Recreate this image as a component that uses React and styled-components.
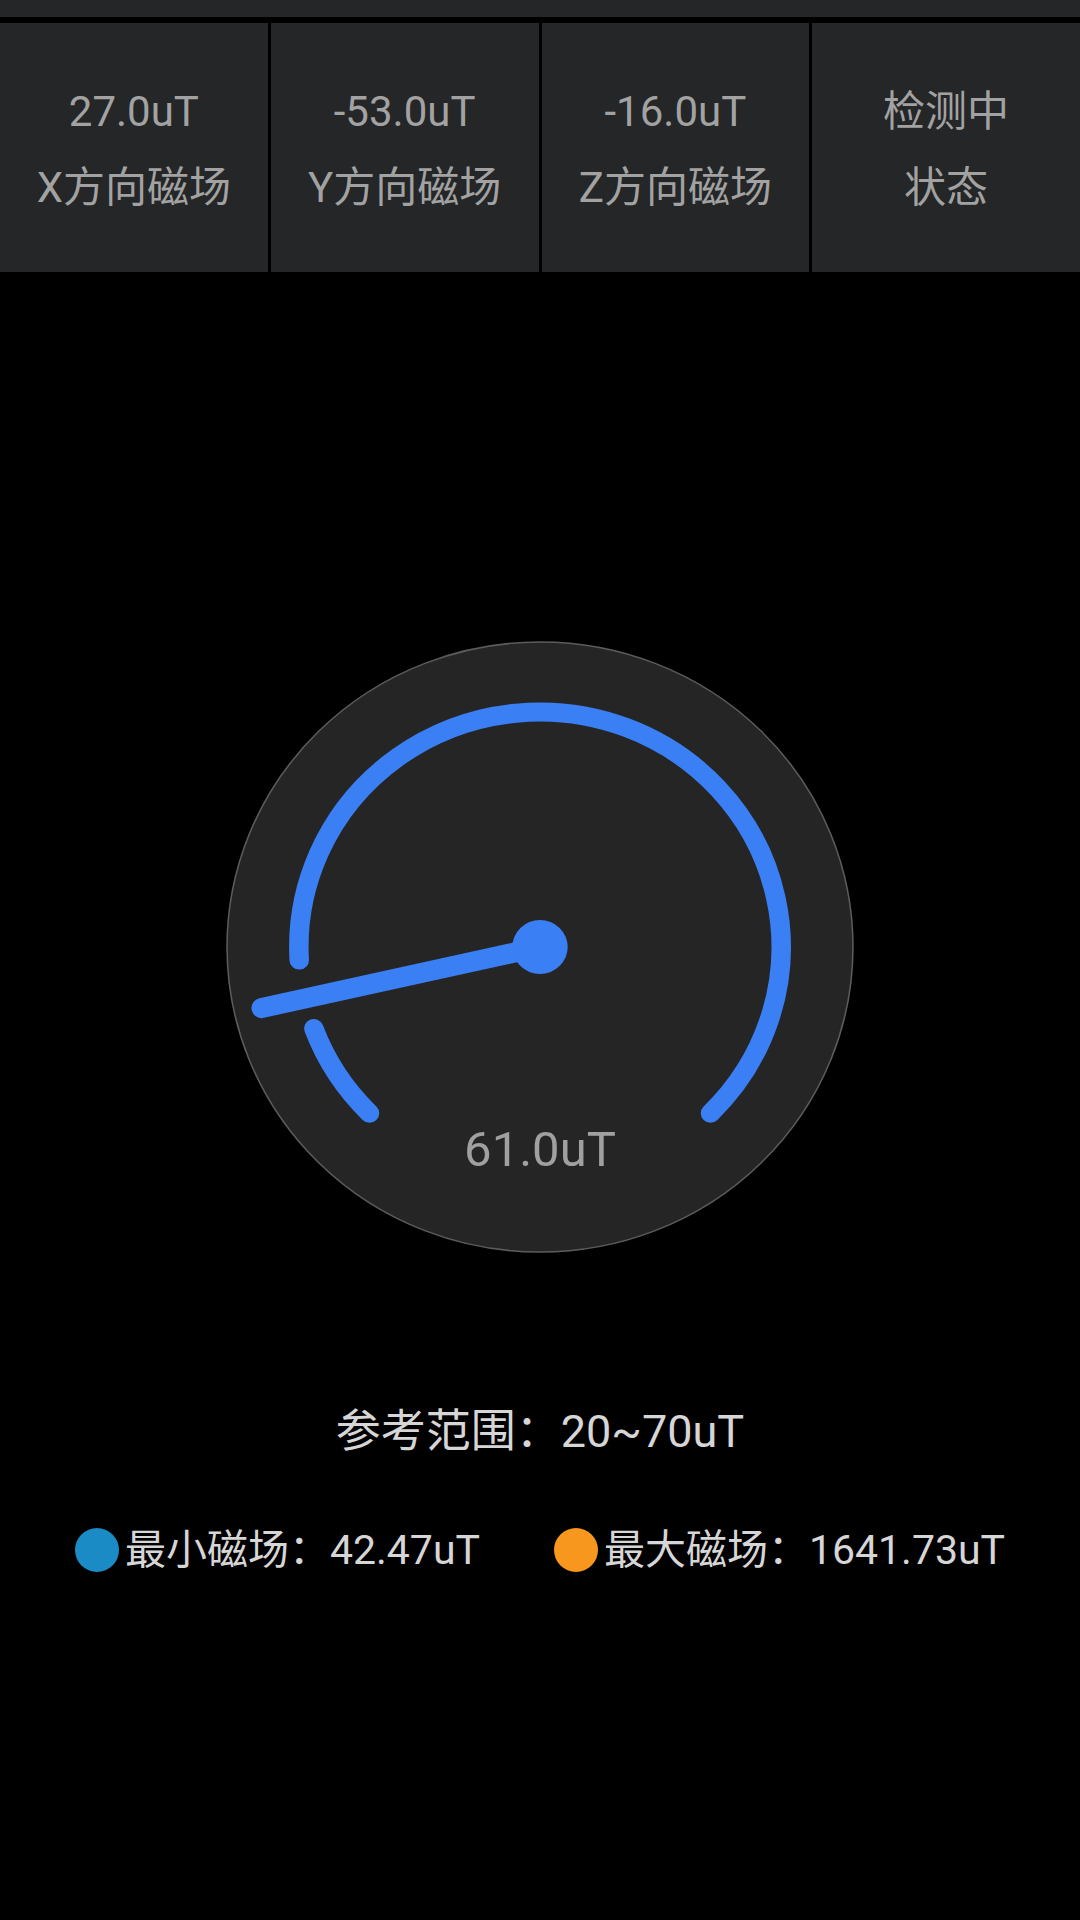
import React from 'react'
import styled, { createGlobalStyle } from 'styled-components'

const GlobalStyle = createGlobalStyle`
    html, body {
        margin: 0;
        padding: 0;
        background: #000;
    }
    body {
        font-family: Roboto, "Noto Sans CJK SC", sans-serif;
        -webkit-font-smoothing: antialiased;
    }
`;

const axes = [
    { value: '27.0uT', label: 'X方向磁场' },
    { value: '-53.0uT', label: 'Y方向磁场' },
    { value: '-16.0uT', label: 'Z方向磁场' },
    { value: '检测中', label: '状态' },
];

// gauge geometry, in viewBox units (612 x 612)
const C = 306;
const R = 235;
const NEEDLE_ANGLE = 167.3;
const NEEDLE_LEN = 278;

function point(deg, r = R) {
    const a = (deg * Math.PI) / 180;
    return [C + r * Math.cos(a), C + r * Math.sin(a)];
}

function arcPath(start, end) {
    const [x1, y1] = point(start);
    const [x2, y2] = point(end);
    const large = end - start > 180 ? 1 : 0;
    return `M ${x1} ${y1} A ${R} ${R} 0 ${large} 1 ${x2} ${y2}`;
}

function Gauge({ reading }) {
    const [nx, ny] = point(NEEDLE_ANGLE, NEEDLE_LEN);
    return (
        <GaugeBox>
            <svg width="628" height="612" viewBox="0 0 612 612" preserveAspectRatio="none">
                <circle cx={C} cy={C} r="305" fill="#252525" stroke="#5c5c5c" strokeWidth="1.5" />
                <g fill="none" stroke="#3b7ff5" strokeLinecap="round">
                    <path d={arcPath(135, 159.7)} strokeWidth="19" />
                    <path d={arcPath(176.8, 405)} strokeWidth="19" />
                    <line x1={C} y1={C} x2={nx} y2={ny} strokeWidth="20" />
                </g>
                <circle cx={C} cy={C} r="27" fill="#3b7ff5" />
            </svg>
            <Reading>{reading}</Reading>
        </GaugeBox>
    );
}

function App() {
    return (
        <Screen>
            <GlobalStyle />
            <TopStrip />
            <AxisRow>
                {axes.map((a) => (
                    <AxisCard key={a.label}>
                        <AxisValue>{a.value}</AxisValue>
                        <AxisLabel>{a.label}</AxisLabel>
                    </AxisCard>
                ))}
            </AxisRow>
            <Gauge reading="61.0uT" />
            <RangeText>参考范围：20~70uT</RangeText>
            <Legend>
                <LegendItem>
                    <Dot color="#1a8bc4" />
                    <span>最小磁场：42.47uT</span>
                </LegendItem>
                <LegendItem>
                    <Dot color="#f7971d" />
                    <span>最大磁场：1641.73uT</span>
                </LegendItem>
            </Legend>
        </Screen>
    );
}
export default App;

const Screen = styled.div`
    width: 1080px;
    min-height: 1920px;
    background: #000;
    display: flex;
    flex-direction: column;
`;

const TopStrip = styled.div`
    height: 17px;
    background: #242627;
`;

const AxisRow = styled.div`
    margin-top: 6px;
    height: 249px;
    display: grid;
    grid-template-columns: repeat(4, 1fr);
    gap: 3px;
`;

const AxisCard = styled.div`
    background: #242627;
    display: flex;
    flex-direction: column;
    align-items: center;
    padding-top: 61px;
    gap: 20px;
    color: #a2a2a2;
    font-size: 42px;
`;

const AxisValue = styled.div`
    line-height: 56px;
`;

const AxisLabel = styled.div`
    line-height: 56px;
`;

const GaugeBox = styled.div`
    position: relative;
    align-self: center;
    margin-top: 369px;
    width: 628px;
    height: 612px;

    svg {
        display: block;
    }
`;

const Reading = styled.div`
    position: absolute;
    left: 0;
    right: 0;
    top: 479px;
    text-align: center;
    line-height: 60px;
    font-size: 49px;
    color: #a0a0a0;
`;

const RangeText = styled.div`
    margin-top: 149px;
    text-align: center;
    line-height: 60px;
    font-size: 45px;
    color: #d6d6d6;
`;

const Legend = styled.div`
    margin-top: 58px;
    display: flex;
    justify-content: center;
    gap: 74px;
    font-size: 41px;
    line-height: 60px;
    color: #d6d6d6;
`;

const LegendItem = styled.div`
    display: flex;
    align-items: center;
    gap: 6px;
`;

const Dot = styled.span`
    width: 44px;
    height: 44px;
    border-radius: 50%;
    background: ${(p) => p.color};
`;
